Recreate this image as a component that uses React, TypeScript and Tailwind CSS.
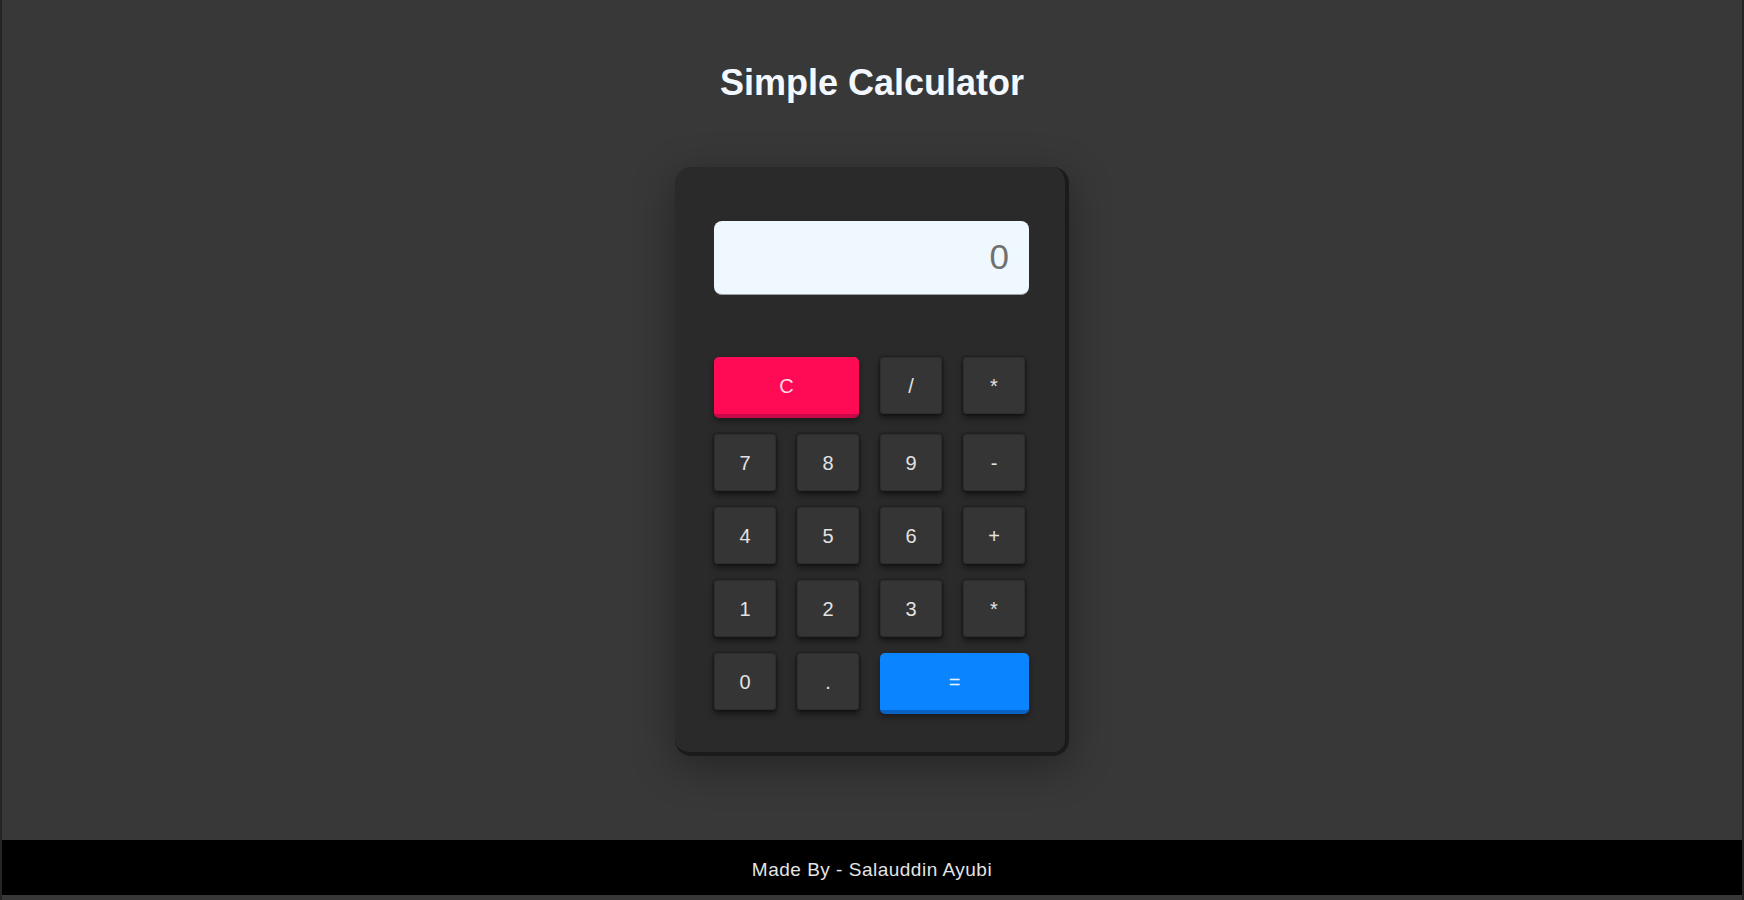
import React from "react";

const font = { fontFamily: '"Liberation Sans", Arial, sans-serif' };

type Key = { label: string; kind?: "clear" | "equal"; span?: boolean };

const keys: Key[] = [
  { label: "C", kind: "clear", span: true },
  { label: "/" },
  { label: "*" },
  { label: "7" },
  { label: "8" },
  { label: "9" },
  { label: "-" },
  { label: "4" },
  { label: "5" },
  { label: "6" },
  { label: "+" },
  { label: "1" },
  { label: "2" },
  { label: "3" },
  { label: "*" },
  { label: "0" },
  { label: "." },
  { label: "=", kind: "equal", span: true },
];

const CalcKey: React.FC<{ k: Key }> = ({ k }) => {
  if (k.kind === "clear") {
    return (
      <button className="col-span-2 h-[61px] rounded-[5px] bg-[#ff0a54] border-b-4 border-[#c9084a] text-[20px] text-[#ffd9e4] shadow-[0_3px_6px_rgba(0,0,0,0.4)]">
        {k.label}
      </button>
    );
  }
  if (k.kind === "equal") {
    return (
      <button className="col-span-2 w-[calc(100%+4px)] h-[61px] rounded-[5px] bg-[#0a84ff] border-b-4 border-[#0a62c4] text-[20px] text-[#e6f1ff] shadow-[0_3px_6px_rgba(0,0,0,0.4)]">
        {k.label}
      </button>
    );
  }
  return (
    <button className="h-[57px] rounded-[3px] bg-[#353535] border border-[#2d2d2d] text-[20px] text-[#e2e2e2] shadow-[0_4px_6px_rgba(0,0,0,0.5),0_0_0_2px_rgba(0,0,0,0.12)]">
      {k.label}
    </button>
  );
};

export default function App() {
  return (
    <div
      className="h-[900px] w-full flex flex-col bg-[#383838] border-x-2 border-[#262626] pb-[5px]"
      style={font}
    >
      <main className="flex-1 flex flex-col items-center">
        <h1 className="pt-[61px] text-[36px] leading-[43px] font-bold text-[#f3f8ff]">
          Simple Calculator
        </h1>

        {/* Calculator body */}
        <div className="mt-[63px] w-[394px] h-[589px] rounded-2xl bg-[#2a2a2a] border-r-4 border-b-4 border-[#1b1b1b] pl-[39px] pt-[54px] shadow-[0_10px_40px_rgba(0,0,0,0.35)]">
          <div className="w-[315px] h-[74px] rounded-lg bg-[#f0f8ff] flex items-center justify-end pr-[20px] text-[35px] text-[#707070] border-b border-[#9aa0a6]">
            0
          </div>

          <div className="mt-[62px] grid grid-cols-[repeat(4,62px)] gap-x-[21px] gap-y-[16px]">
            {keys.map((k, i) => (
              <CalcKey key={i} k={k} />
            ))}
          </div>
        </div>
      </main>

      <footer className="h-[55px] bg-black flex items-center justify-center pt-[5px] text-[19px] tracking-[0.5px] text-[#e4e4e4]">
        Made By - Salauddin Ayubi
      </footer>
    </div>
  );
}
